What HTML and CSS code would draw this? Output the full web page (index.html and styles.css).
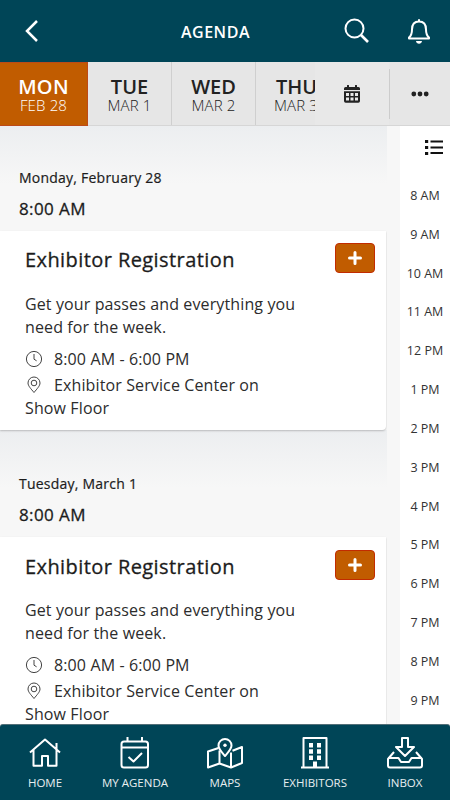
FILE: index.html
```html
<!DOCTYPE html>
<html lang="en">
<head>
<meta charset="utf-8">
<title>Agenda</title>
<link rel="stylesheet" href="styles.css">
</head>
<body>
<div class="app">
  <header class="topbar">
    <svg class="back" width="14" height="24" viewBox="0 0 14 24"><path d="M13 2 3 12l10 10"/></svg>
    <h1>AGENDA</h1>
    <svg class="search" width="26" height="26" viewBox="0 0 26 26"><circle cx="10.500" cy="10.500" r="9"/><path d="m17 17 7 7" stroke-width="2.600"/></svg>
    <svg class="bell" width="24" height="27" viewBox="0 0 24 27"><path d="M12 1.200v2M2 20.500v-1C4.500 17.500 5 15 5 11.500 5 6.500 7.700 3.500 12 3.500s7 3 7 8c0 3.500.5 6 3 8v1Z"/><path class="solid" d="M9 23h6c-.3 1.800-1.300 2.800-3 2.800S9.300 24.800 9 23Z"/></svg>
  </header>
  <nav class="days">
    <div class="day active"><b>MON</b><span>FEB 28</span></div>
    <div class="day"><b>TUE</b><span>MAR 1</span></div>
    <div class="day"><b>WED</b><span>MAR 2</span></div>
    <div class="day clipped"><b>THU</b><span>MAR 3</span></div>
    <div class="tool"><svg width="16" height="18" viewBox="0 0 16 18"><path fill="#222" fill-rule="evenodd" d="M3 2V.8a1 1 0 0 1 2 0V2h6V.8a1 1 0 0 1 2 0V2h1.500A1.500 1.500 0 0 1 16 3.500V5H0V3.500A1.500 1.500 0 0 1 1.500 2ZM0 6.200h16v9.800a1.700 1.700 0 0 1-1.700 1.700H1.700A1.700 1.700 0 0 1 0 16ZM2 8v3h3V8Zm4.500 0v3h3V8ZM11 8v3h3V8ZM2 12.500v3h3v-3Zm4.500 0v3h3v-3Zm4.500 0v3h3v-3Z"/></svg></div>
    <div class="more"><svg width="18" height="6" viewBox="0 0 18 6"><g fill="#222"><circle cx="2.800" cy="3" r="2.400"/><circle cx="9" cy="3" r="2.400"/><circle cx="15.200" cy="3" r="2.400"/></g></svg></div>
  </nav>
  <main class="content">
    <div class="list">
      <section>
        <div class="heading"><h2>Monday, February 28</h2><h3>8:00 AM</h3></div>
        <article class="card">
          <div class="title"><h4>Exhibitor Registration</h4><button aria-label="Add"><svg width="14" height="14" viewBox="0 0 14 14"><path d="M7 1.500v11M1.500 7h11"/></svg></button></div>
          <p class="text">Get your passes and everything you need for the week.</p>
          <p class="time"><svg width="18" height="18" viewBox="0 0 18 18"><circle cx="9" cy="9" r="7.600"/><path d="M9 4v5.200l2.600 1.600"/></svg>8:00 AM - 6:00 PM</p>
          <p class="place"><svg width="18" height="18" viewBox="0 0 18 18"><path d="M9 16.500C6 12.800 3 9.900 3 7a6 6 0 0 1 12 0c0 2.900-3 5.800-6 9.500Z"/><circle cx="9" cy="7" r="2.800"/></svg>Exhibitor Service Center on Show Floor</p>
        </article>
      </section>
      <section>
        <div class="heading"><h2>Tuesday, March 1</h2><h3>8:00 AM</h3></div>
        <article class="card">
          <div class="title"><h4>Exhibitor Registration</h4><button aria-label="Add"><svg width="14" height="14" viewBox="0 0 14 14"><path d="M7 1.500v11M1.500 7h11"/></svg></button></div>
          <p class="text">Get your passes and everything you need for the week.</p>
          <p class="time"><svg width="18" height="18" viewBox="0 0 18 18"><circle cx="9" cy="9" r="7.600"/><path d="M9 4v5.200l2.600 1.600"/></svg>8:00 AM - 6:00 PM</p>
          <p class="place"><svg width="18" height="18" viewBox="0 0 18 18"><path d="M9 16.500C6 12.800 3 9.900 3 7a6 6 0 0 1 12 0c0 2.900-3 5.800-6 9.500Z"/><circle cx="9" cy="7" r="2.800"/></svg>Exhibitor Service Center on Show Floor</p>
        </article>
      </section>
    </div>
    <aside class="hours">
      <svg class="listicon" width="18" height="16" viewBox="0 0 18 16"><path fill="#111" d="M0 1h3.200v3H0Zm0 6h3.200v3H0Zm0 6h3.200v3H0ZM5.500 1.600H18v1.800H5.500Zm0 6H18v1.800H5.500Zm0 5.500H18v1.800H5.500Z"/></svg>
      <span>8 AM</span><span>9 AM</span><span>10 AM</span><span>11 AM</span><span>12 PM</span><span>1 PM</span><span>2 PM</span><span>3 PM</span><span>4 PM</span><span>5 PM</span><span>6 PM</span><span>7 PM</span><span>8 PM</span><span>9 PM</span>
    </aside>
  </main>
  <footer class="tabs">
    <a><svg width="36" height="34" viewBox="0 0 36 34"><path d="M3 15.500 18 2.500l15 13M6.500 13v15.800H15V19h6v9.800h8.500V13M29.500 12V6"/></svg>HOME</a>
    <a><svg width="36" height="34" viewBox="0 0 36 34"><rect x="4.500" y="4.500" width="26.500" height="26" rx="2.500"/><path d="M4.500 10.500H31M10.500 0v4.500M25 0v4.500M11.500 20l5 4.500 8.500-8.500"/></svg>MY AGENDA</a>
    <a><svg width="36" height="34" viewBox="0 0 36 34"><path d="M11.500 11 1 14.500V30.500l11.500-4 11.500 4 11-4.500V10l-9.500 3.800M12.500 13.500v13M24 15.500v15"/><path d="M18 19c-3.500-4-6.500-7-6.500-10.500a6.500 6.500 0 0 1 13 0c0 3.500-3 6.500-6.500 10.500Z"/><circle class="solid" cx="18" cy="8.300" r="1.700"/></svg>MAPS</a>
    <a><svg width="36" height="34" viewBox="0 0 36 34"><path d="M4 30.500h28M6.500 30V1h23v29"/><path class="solid" d="M12 6h4v4.500h-4Zm8 0h4v4.500h-4Zm-8 6.300h4v4.500h-4Zm8 0h4v4.500h-4Zm-8 6.200h4V23h-4Zm8 0h4V23h-4Zm-4 6h4V30h-4Z"/></svg>EXHIBITORS</a>
    <a><svg width="36" height="34" viewBox="0 0 36 34"><path d="M15 1h6v9h6l-9 9-9-9h6ZM7 15l-6 7v6.500q0 2 2 2h30q2 0 2-2V22l-6-7M1 21h10.500l2.500 4h8l2.500-4H35"/></svg>INBOX</a>
  </footer>
</div>
</body>
</html>
```

FILE: styles.css
```css
* { box-sizing: border-box; }
body { margin: 0; font-family: "Open Sans", sans-serif; color: #1c1c1c; }
h1, h2, h3, h4, p { margin: 0; }
svg { fill: none; flex: none; }
.app { width: 450px; height: 800px; display: flex; flex-direction: column; overflow: hidden; background: #f7f7f7; }

.topbar { height: 62px; flex: none; background: #004557; display: grid; grid-template-columns: 24px 157px 163px 63px 43px; align-items: center; }
.topbar h1 { grid-column: 3; color: #fff; font-size: 16px; font-weight: 600; letter-spacing: .5px; line-height: 20px; padding-top: 1px; }
.topbar svg { stroke: #fff; stroke-width: 2; }
.topbar .back { grid-column: 2; stroke-width: 2.500; }
.topbar .bell { stroke-linejoin: round; }
.solid { fill: #fff; stroke: none; }

.days { height: 64px; flex: none; display: flex; background: #e6e6e6; border-bottom: 1px solid #d6d6d6; }
.day { width: 84px; flex: none; border-right: 1px solid #cfcfcf; display: flex; flex-direction: column; align-items: center; padding-top: 12px; color: #222; }
.day b { font-size: 20px; line-height: 25px; font-weight: 600; }
.day span { font-size: 15px; line-height: 13px; font-weight: 300; letter-spacing: .15px; }
.day.active { width: 88px; background: #c15c00; color: #fff; border: 1px solid #bd4a18; border-left: 0; padding-top: 11px; margin-bottom: -1px; }
.day.active b { letter-spacing: .3px; }
.day.clipped { width: 59px; border: 0; overflow: hidden; align-items: flex-start; padding-left: 18px; white-space: nowrap; }
.day.clipped b { padding-left: 2px; }
.tool { width: 74px; background: #e8e8e8; display: flex; align-items: center; padding-left: 29px; }
.more { flex: 1; margin: 7px 0 6px; border-left: 1px solid #ccc; display: flex; align-items: center; justify-content: center; }

.content { flex: 1; min-height: 0; display: flex; justify-content: space-between; }
.list { width: 387px; overflow: hidden; }
.heading { height: 105px; padding: 42px 19px 0; background: linear-gradient(#eceef0, #f7f7f7 58px); }
section + section .heading { height: 107px; padding-top: 44px; }
.heading h2, .heading h3, .title h4 { font-weight: 400; -webkit-text-stroke: .3px #1c1c1c; }
.heading h2 { font-size: 14px; line-height: 20px; letter-spacing: .23px; -webkit-text-stroke-width: .2px; }
.heading h3 { font-size: 17px; line-height: 24px; letter-spacing: .4px; margin-top: 9px; }
.card { width: 386px; height: 199px; background: #fff; padding: 12px 11px 0 25px; border-radius: 0 0 4px 0; box-shadow: 0 1px 2px rgba(0,0,0,.22); position: relative; }
section + section .card { padding-top: 13px; }
section + section .title { height: 49px; }
.title { display: flex; justify-content: space-between; height: 50px; }
.title h4 { font-size: 20px; line-height: 34px; letter-spacing: .42px; }
.title button { width: 40px; height: 30px; padding: 0; border: 1px solid #c22b00; border-radius: 4px; background: #c15c00; display: flex; align-items: center; justify-content: center; }
.title button path { stroke: #fff; stroke-width: 3; stroke-linecap: round; }
.text, .time, .place { font-size: 16px; line-height: 23px; font-weight: 400; letter-spacing: .12px; color: #2c2c2c; }
.text { width: 285px; }
.time { margin-top: 9px; }
.place { margin-top: 3px; width: 250px; }
.card p svg { stroke: #444; stroke-width: 1; vertical-align: -3px; margin-right: 11px; }

.hours { width: 50px; background: #fff; display: flex; flex-direction: column; align-items: center; overflow: hidden; }
.hours span { height: 38.840px; flex: none; font-size: 12.500px; line-height: 38.840px; font-weight: 400; color: #333; }
.listicon { margin: 13px 0 22px 18px; }

.tabs { height: 76px; flex: none; background: #004557; border-top: 1px solid #536f78; border-radius: 3px 3px 0 0; display: flex; position: relative; }
.tabs a { width: 90px; display: flex; flex-direction: column; align-items: center; color: #e8eef0; font-size: 11.500px; font-weight: 400; line-height: 16px; padding-top: 12px; gap: 4px; white-space: nowrap; }
.tabs svg { stroke: #fff; stroke-width: 2; stroke-linejoin: round; }
.tabs .solid { stroke: none; }
```
